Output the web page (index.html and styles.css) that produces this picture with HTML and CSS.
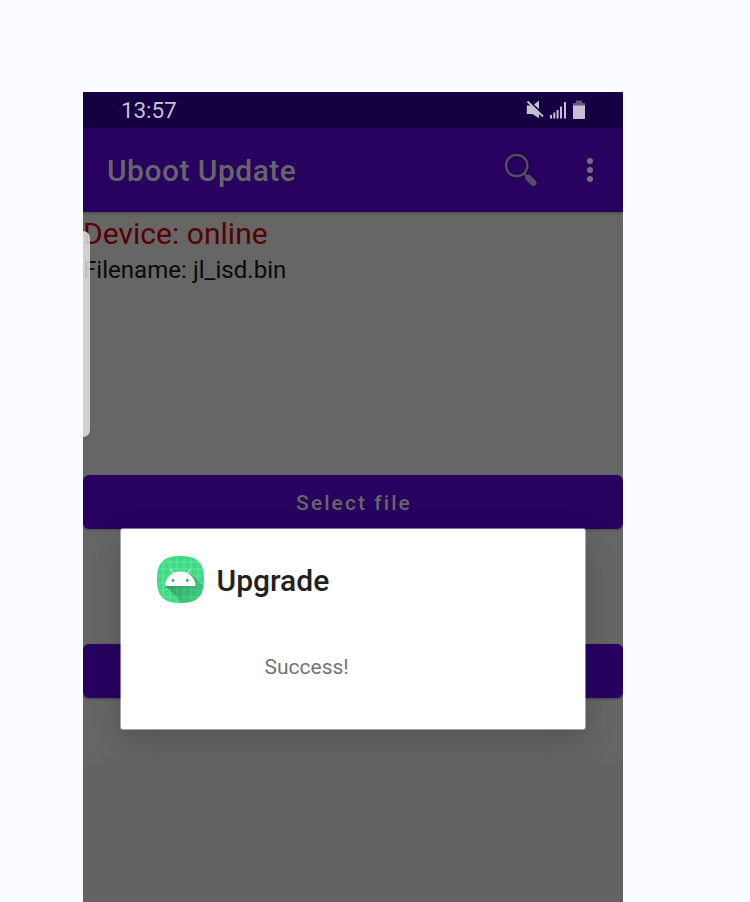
FILE: index.html
```html
<!DOCTYPE html>
<html lang="en">
<head>
<meta charset="utf-8">
<title>Uboot Update</title>
<link rel="stylesheet" href="styles.css">
</head>
<body>
<main class="phone">
  <div class="status">
    <span class="clock">13:57</span>
    <svg class="status-icons" width="60" height="20" viewBox="0 0 60 20">
      <path class="lit" d="M.800 5.500H5L13 13.500v4.800L6.500 14H.800zM8 4.500L13 .600v8.400z"/>
      <path class="slash" d="M1.500 1.500L17 16.500"/>
      <path class="lit" d="M24 15h2v3.500h-2zM27.300 12.500h2v6h-2zM30.600 10h2v8.500h-2zM34 6.500h2v12h-2zM38 2h2v16.500h-2z"/>
      <path class="dim" d="M50 .5h6v2.500h3v3H47V3h3z"/>
      <path class="lit" d="M47 5.500h12v12.500q0 1-1 1H48q-1 0-1-1z"/>
    </svg>
  </div>
  <header class="bar">
    <h1 class="title">Uboot Update</h1>
    <svg class="search" width="36" height="36" viewBox="0 0 36 36">
      <g class="search-edge"><circle cx="13.700" cy="13.500" r="10.700"/><path d="M21 21.500l3 3"/><path class="grip" d="M25.500 26l4.800 4.800"/></g>
      <g class="search-face"><circle cx="13.700" cy="13.500" r="10.700"/><path d="M21 21.500l3 3"/><path class="grip" d="M25.500 26l4.800 4.800"/></g>
    </svg>
    <svg class="more" width="6" height="26" viewBox="0 0 6 26"><circle cx="3" cy="4" r="3"/><circle cx="3" cy="13" r="3"/><circle cx="3" cy="22" r="3"/></svg>
  </header>
  <section class="content">
    <p class="device">Device: online</p>
    <p class="filename">Filename: jl_isd.bin</p>
    <div class="button select">Select file</div>
    <div class="button"></div>
  </section>
  <div class="edge-handle"></div>
  <section class="dialog" role="dialog">
    <div class="dialog-head">
      <svg class="app-icon" width="48" height="48" viewBox=".5 .5 48 48">
        <defs>
          <clipPath id="tile"><path d="M24 .5C41 .5 47.500 7 47.500 24S41 47.500 24 47.500.5 41 .5 24 7 .5 24 .5z"/></clipPath>
          <linearGradient id="shade" x1="0" y1="0" x2="1" y2="1"><stop offset="0" stop-opacity=".34"/><stop offset="1" stop-opacity=".02"/></linearGradient>
        </defs>
        <g clip-path="url(#tile)">
          <path fill="#3ddc84" d="M0 0h48v48H0z"/>
          <path class="grid" d="M6.500 0v48M13.500 0v48M20.500 0v48M27.500 0v48M34.500 0v48M41.500 0v48M0 6.500h48M0 13.500h48M0 20.500h48M0 27.500h48M0 34.500h48M0 41.500h48"/>
          <path fill="url(#shade)" d="M9 30.500L35 19l13 13v16H26z"/>
        </g>
        <path fill="#fff" d="M8.500 30.500a15.300 14.500 0 0 1 30.600 0z"/>
        <path class="antenna" d="M14.300 14l3.200 5M33.400 14l-3.200 5"/>
        <circle cx="16.500" cy="25" r="1.400" fill="#3ba66d"/><circle cx="30.800" cy="25" r="1.400" fill="#3ba66d"/>
      </svg>
      <h2 class="dialog-title">Upgrade</h2>
    </div>
    <p class="message">Success!</p>
  </section>
</main>
</body>
</html>
```
FILE: styles.css
```css
* { box-sizing: border-box; }
body { margin: 0; height: 902px; padding: 92px 0 0 83px; background: #fafcff; overflow: hidden; font-family: Roboto, sans-serif; }
h1, h2, p { margin: 0; }
.phone { position: relative; width: 540px; height: 810px; background: linear-gradient(#666 660px, #636363 676px); overflow: hidden; }
.status { display: flex; align-items: center; justify-content: space-between; height: 36px; padding: 0 37px 0 38px; background: #160044; }
.clock { font-size: 22.500px; line-height: 36px; letter-spacing: -.1px; color: #c5bfd0; }
.lit { fill: #c5bfd0; }
.dim { fill: #66558a; }
.slash { fill: none; stroke: #c5bfd0; stroke-width: 1.900; }
.bar { display: flex; align-items: center; height: 84px; padding: 0 30px 0 24px; background: #270060; box-shadow: 0 1px 4px rgba(0,0,0,.3); }
.title { flex: 1; font-size: 30px; line-height: 36px; font-weight: 500; letter-spacing: .48px; color: #666; padding-top: 2px; }
.search { margin-right: 48px; }
.search-edge, .search-face { fill: none; stroke-linecap: round; }
.search-edge { stroke: #190936; stroke-width: 4.500; }
.search-face { stroke: #5b4773; stroke-width: 2.300; }
.search-edge .grip { stroke-width: 9px; }
.search-face .grip { stroke-width: 6.500; }
.more { fill: #757078; }
.content { height: 690px; }
.device { height: 41px; padding-top: 4px; font-size: 30px; line-height: 35px; letter-spacing: .03px; color: #570000; }
.filename { height: 222px; padding-top: 3px; font-size: 24px; line-height: 28px; letter-spacing: .04px; color: #090909; }
.button { height: 54px; border-radius: 6px; background: #270060; box-shadow: 0 1px 3px rgba(0,0,0,.3); }
.select { margin-bottom: 115px; padding-left: 2px; text-align: center; font-size: 21px; line-height: 56px; font-weight: 500; letter-spacing: 2.060px; color: #666; }
.edge-handle { position: absolute; left: 0; top: 139px; width: 7px; height: 206px; border-radius: 0 7px 7px 0; background: rgba(238,238,238,.8); }
.dialog { position: absolute; left: 38px; top: 437px; width: 464px; height: 200px; padding: 27px 36px; border-radius: 2px; background: #fff; box-shadow: 0 0 0 1px rgba(255,255,255,.45), 0 12px 32px rgba(0,0,0,.2); }
.dialog-head { display: flex; align-items: center; gap: 11.500px; height: 48px; }
.dialog-title { padding-top: 2px; font-size: 30px; line-height: 36px; font-weight: 500; color: #212121; }
.message { padding: 50px 0 0 107.500px; font-size: 21px; line-height: 26px; color: #757575; }
.grid { fill: none; stroke: #73e6a8; stroke-width: .8; }
.antenna { fill: none; stroke: #fff; stroke-width: 1.200; stroke-linecap: round; }
```
